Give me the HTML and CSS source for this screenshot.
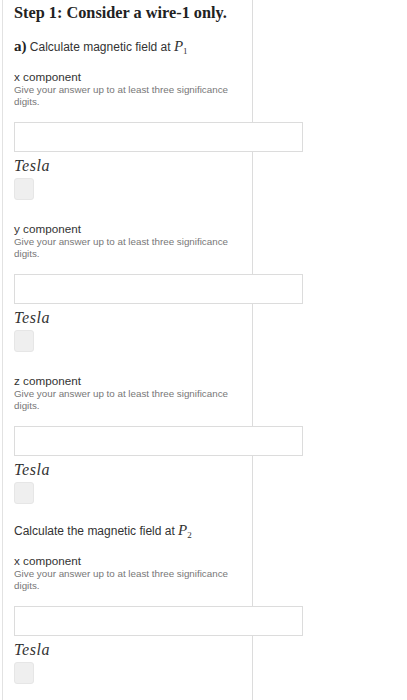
FILE: index.html
```html
<!DOCTYPE html>
<html>
<head>
<meta charset="utf-8">
<link rel="stylesheet" href="styles.css">
</head>
<body>
<div class="page">
  <div class="main">
    <h1 class="title">Step 1: Consider a wire-1 only.</h1>
    <p class="part"><b class="label">a)</b> Calculate magnetic field at <span class="math"><i>P</i><sub>1</sub></span></p>

    <div class="q first">
      <div class="qname">x component</div>
      <div class="help">Give your answer up to at least three significance digits.</div>
      <div class="input"></div>
      <div class="unit">Tesla</div>
      <div class="chip"></div>
    </div>

    <div class="q">
      <div class="qname">y component</div>
      <div class="help">Give your answer up to at least three significance digits.</div>
      <div class="input"></div>
      <div class="unit">Tesla</div>
      <div class="chip"></div>
    </div>

    <div class="q">
      <div class="qname">z component</div>
      <div class="help">Give your answer up to at least three significance digits.</div>
      <div class="input"></div>
      <div class="unit">Tesla</div>
      <div class="chip"></div>
    </div>

    <p class="part part2">Calculate the magnetic field at <span class="math"><i>P</i><sub>2</sub></span></p>

    <div class="q first2">
      <div class="qname">x component</div>
      <div class="help">Give your answer up to at least three significance digits.</div>
      <div class="input"></div>
      <div class="unit">Tesla</div>
      <div class="chip"></div>
    </div>
  </div>
</div>
</body>
</html>
```

FILE: styles.css
```css
html, body {
  margin: 0;
  padding: 0;
  background: #fff;
}
.page {
  display: flex;
  height: 700px;
  overflow: hidden;
}
.main {
  margin-left: 2px;
  width: 238px;
  border-left: 1px solid #e2e2e2;
  border-right: 1px solid #dcdcdc;
  padding: 3px 0 0 11px;
  height: 700px;
  font-family: "Liberation Sans", Arial, sans-serif;
  color: #333;
}
.title {
  margin: 0;
  font-family: "Liberation Serif", "Times New Roman", serif;
  font-weight: bold;
  font-size: 16.3px;
  line-height: 20px;
  color: #222;
  white-space: nowrap;
}
.part {
  margin: 14px 0 0;
  font-size: 12px;
  line-height: 18px;
  color: #333;
  white-space: nowrap;
}
.label {
  font-family: "Liberation Serif", "Times New Roman", serif;
  font-size: 15px;
  color: #222;
}
.math {
  font-family: "Liberation Serif", "Times New Roman", serif;
  font-size: 15px;
}
.math sub {
  font-size: 9px;
  vertical-align: -3px;
  line-height: 0;
}
.q {
  margin-top: 22px;
}
.q.first {
  margin-top: 14px;
}
.q.first2 {
  margin-top: 14px;
}
.q.third {
  margin-top: 21px;
}
.part2 {
  margin-top: 17px;
}
.qname {
  font-size: 11.7px;
  line-height: 14px;
  color: #333;
}
.help {
  font-size: 9.8px;
  line-height: 12px;
  color: #777;
  width: 224px;
}
.input {
  margin-top: 14px;
  width: 287px;
  height: 28px;
  border: 1px solid #dcdcdc;
  background: #fff;
  position: relative;
}
.unit {
  margin-top: 5px;
  font-family: "Liberation Serif", "Times New Roman", serif;
  font-style: italic;
  font-size: 16px;
  letter-spacing: 0.6px;
  line-height: 18px;
  color: #333;
}
.chip {
  margin-top: 3px;
  width: 18px;
  height: 20px;
  background: #efefef;
  border: 1px solid #e6e6e6;
  border-radius: 3px;
}
```
